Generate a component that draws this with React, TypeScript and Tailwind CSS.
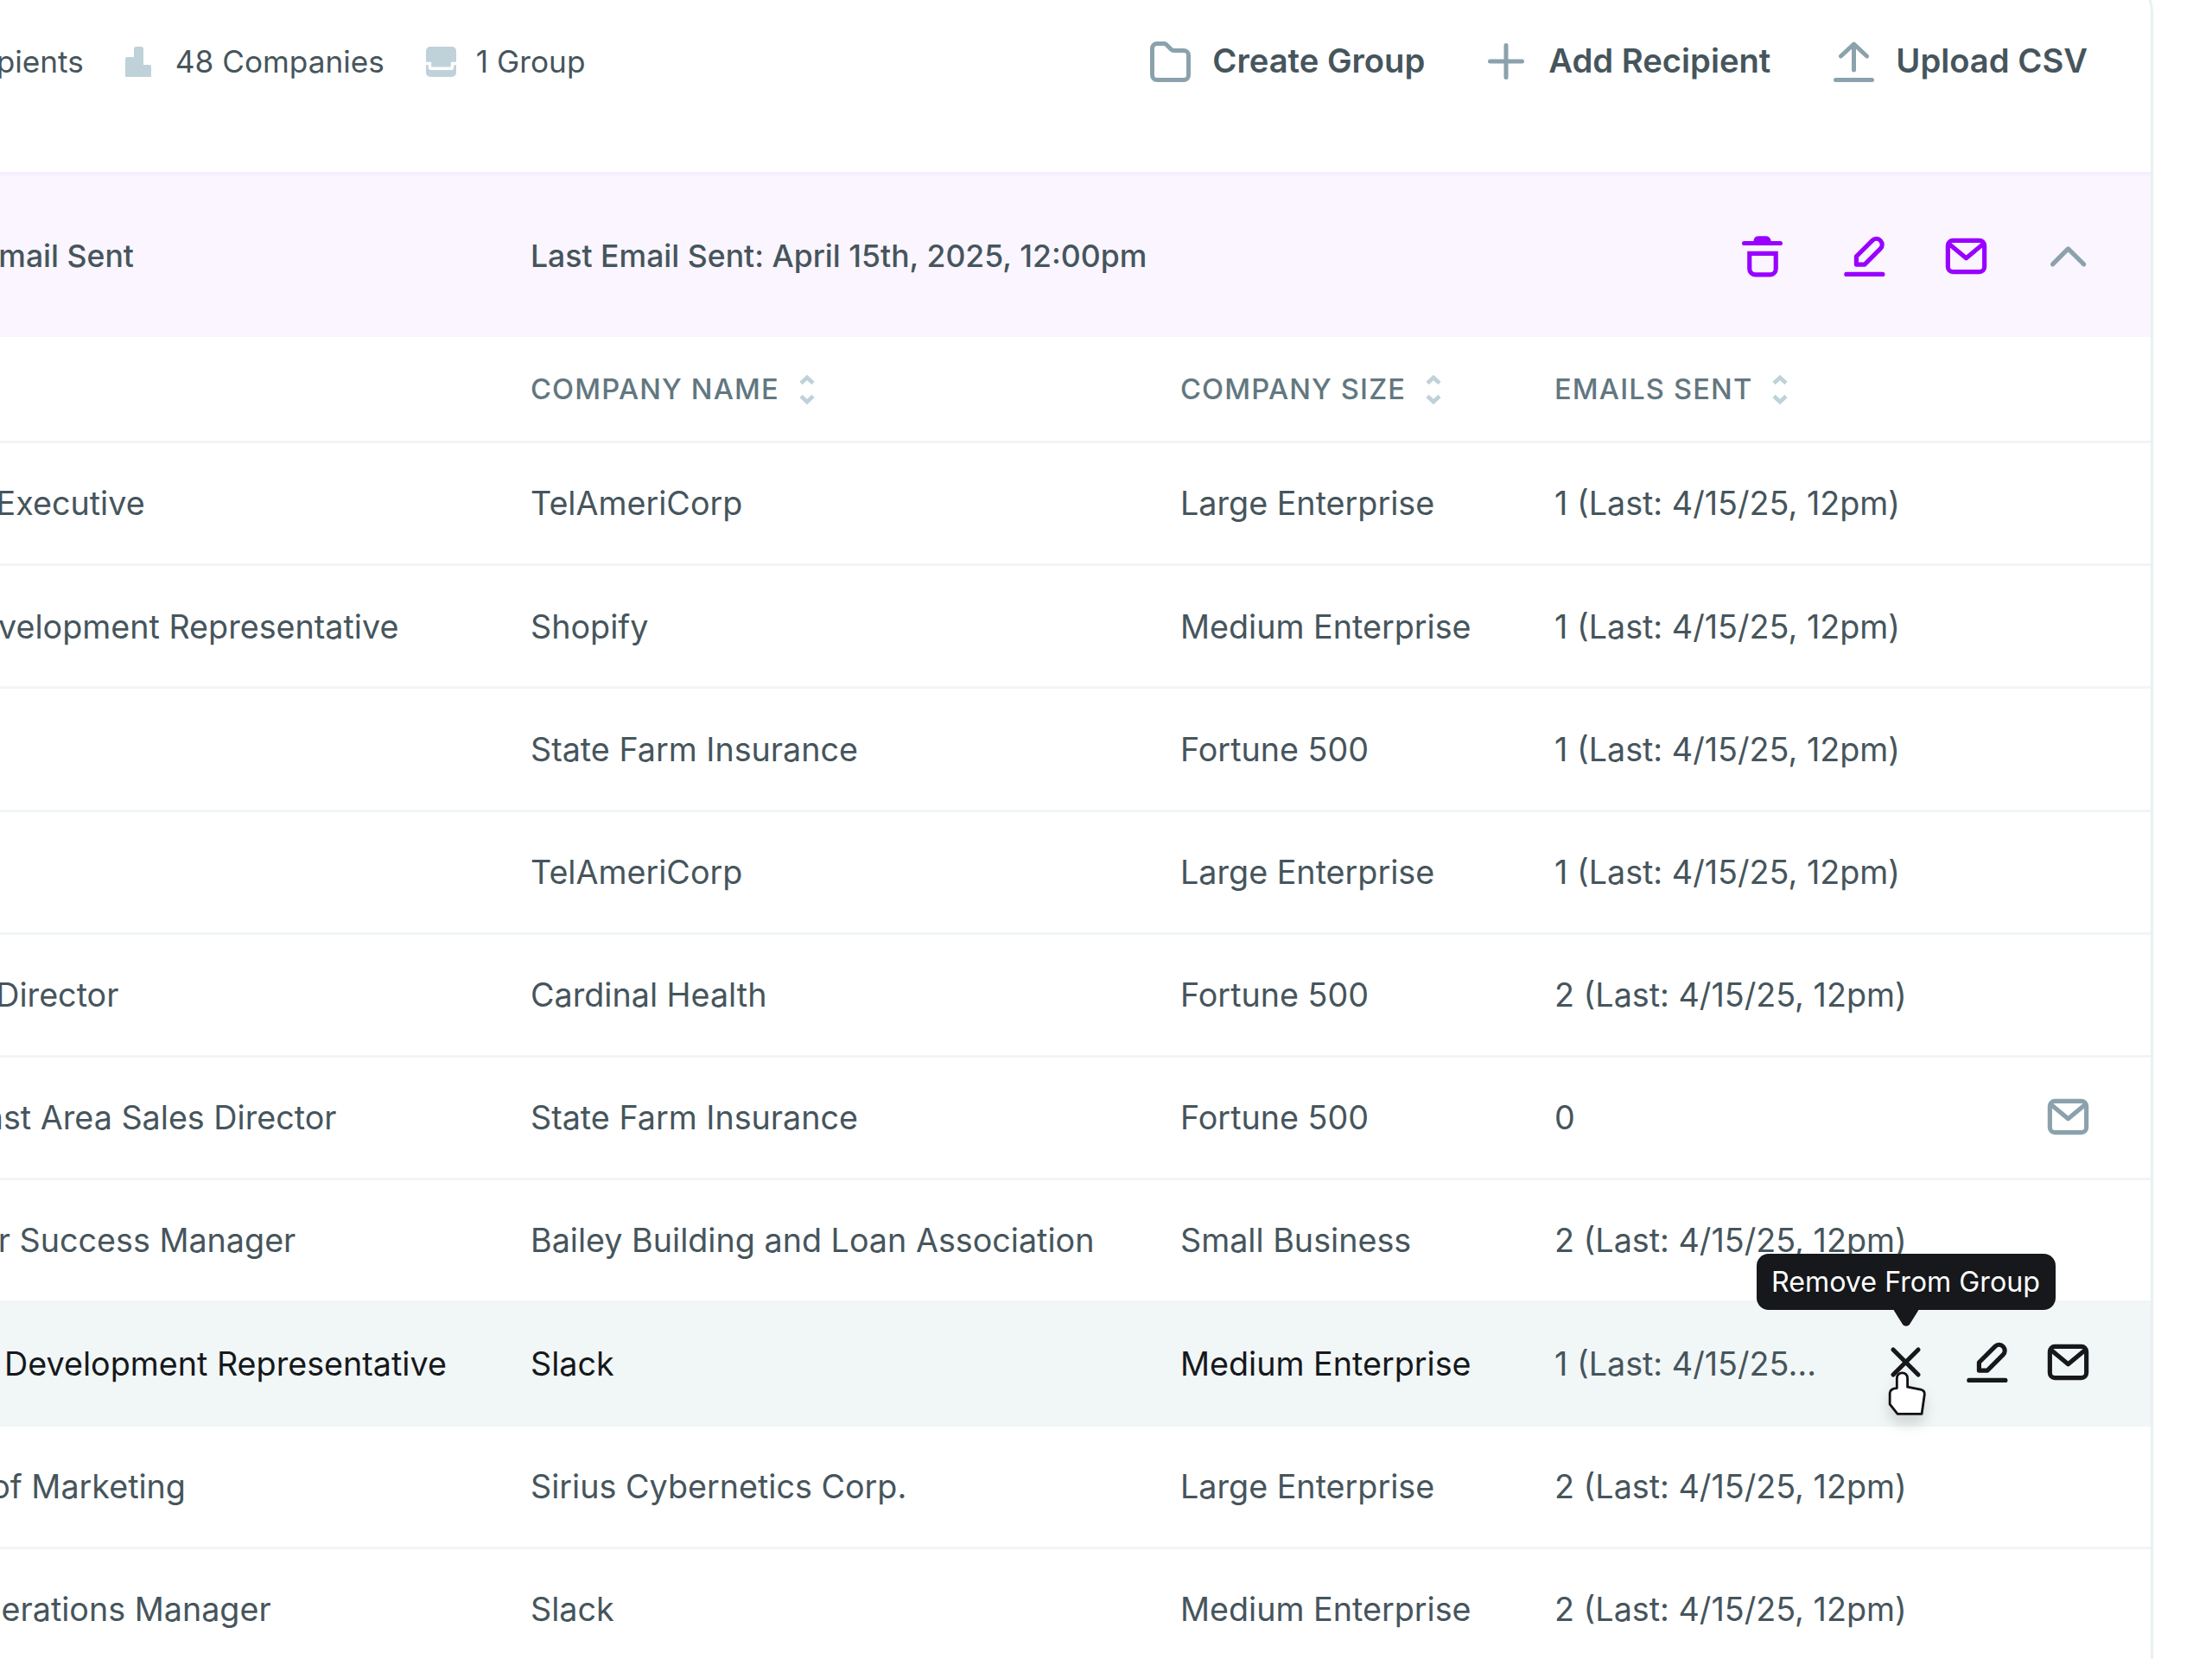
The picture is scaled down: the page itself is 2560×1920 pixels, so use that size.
import React from "react"

const rows = [
  { role: "Sr. Account Executive", company: "TelAmeriCorp", size: "Large Enterprise", sent: "1 (Last: 4/15/25, 12pm)", pad: "pl-[79px]" },
  { role: "Business Development Representative", company: "Shopify", size: "Medium Enterprise", sent: "1 (Last: 4/15/25, 12pm)", pad: "pl-[79px]" },
  { role: "CEO", company: "State Farm Insurance", size: "Fortune 500", sent: "1 (Last: 4/15/25, 12pm)", pad: "pl-[79px]" },
  { role: "CFO", company: "TelAmeriCorp", size: "Large Enterprise", sent: "1 (Last: 4/15/25, 12pm)", pad: "pl-[79px]" },
  { role: "Engineering Director", company: "Cardinal Health", size: "Fortune 500", sent: "2 (Last: 4/15/25, 12pm)", pad: "pl-[72px]" },
  { role: "VP, Northeast Area Sales Director", company: "State Farm Insurance", size: "Fortune 500", sent: "0", mail: true, pad: "pl-[90px]" },
  { role: "Sr. Customer Success Manager", company: "Bailey Building and Loan Association", size: "Small Business", sent: "2 (Last: 4/15/25, 12pm)", pad: "pl-[81px]" },
  { role: "Sr. Business Development Representative", company: "Slack", size: "Medium Enterprise", sent: "1 (Last: 4/15/25, 12pm)", active: true, pad: "pl-[77px]" },
  { role: "Sr. Director of Marketing", company: "Sirius Cybernetics Corp.", size: "Large Enterprise", sent: "2 (Last: 4/15/25, 12pm)", pad: "pl-[79px]" },
  { role: "Regional Operations Manager", company: "Slack", size: "Medium Enterprise", sent: "2 (Last: 4/15/25, 12pm)", pad: "pl-[86px]" },
]

function Icon({ children, className }: { children: React.ReactNode; className?: string }) {
  return (
    <svg viewBox="0 0 24 24" fill="none" stroke="currentColor" strokeWidth={2.1} strokeLinecap="round" strokeLinejoin="round" className={`w-[59px] h-[59px] shrink-0 ${className ?? ""}`}>
      {children}
    </svg>
  )
}

const MailIcon = ({ className }: { className?: string }) => (
  <Icon className={className}>
    <rect x="3.4" y="4.6" width="17.2" height="14.8" rx="2.4" />
    <path d="M4.4 6.6 12 12.9l7.6-6.3" />
  </Icon>
)

const PencilIcon = ({ className }: { className?: string }) => (
  <Icon className={className}>
    <path d="M8.3 15.9v-3.8l7.5-7.5a2.7 2.7 0 0 1 3.8 3.9l-7.4 7.4Z" />
    <path d="M3.6 20.5h17.1" />
  </Icon>
)

const TrashIcon = ({ className }: { className?: string }) => (
  <Icon className={className}>
    <path d="M3.5 5.9h17" />
    <path d="M8.4 4.6c.3-1.2 1-1.6 2-1.6h3.2c1 0 1.7.4 2 1.6Z" fill="currentColor" strokeWidth={1} />
    <path d="M6 10.7h12.4V18a2.7 2.7 0 0 1-2.7 2.7H8.7A2.7 2.7 0 0 1 6 18Z" strokeLinecap="butt" strokeLinejoin="miter" />
  </Icon>
)

function SortIcon() {
  return (
    <svg viewBox="0 0 20 36" fill="none" stroke="#bfd2da" strokeWidth={4.6} className="w-[20px] h-[36px] shrink-0">
      <path d="M3 10.5 10 4l7 6.5" />
      <path d="M3 25.5 10 32l7-6.5" />
    </svg>
  )
}

function HeadCell({ label }: { label: string }) {
  return (
    <div className="flex items-center gap-[22px] pt-[2px]">
      <span className="text-[32.7px] font-medium tracking-[0.035em] text-[#627780]">{label}</span>
      <SortIcon />
    </div>
  )
}

function ToolbarStat({ icon, label, gap }: { icon: React.ReactNode; label: string; gap: string }) {
  return (
    <div className={`flex items-center ${gap}`}>
      {icon}
      <span>{label}</span>
    </div>
  )
}

function ToolbarAction({ icon, label, gap }: { icon: React.ReactNode; label: string; gap: string }) {
  return (
    <button className={`flex items-center ${gap} text-[38.2px] font-semibold text-[#46555c]`}>
      {icon}
      <span>{label}</span>
    </button>
  )
}

export default function App() {
  return (
    <div className="w-[2560px] h-[1920px] overflow-hidden bg-white font-[Inter,sans-serif]">
      <div className="ml-[-300px] mt-[-30px] w-[2792px] rounded-tr-[44px] border-r-[3px] border-t-[3px] border-[#e9f0f3]">
        {/* toolbar */}
        <div className="h-[226px] pt-[74px] pl-[112px] pr-[73px] flex items-start justify-between text-[#46555c]">
          <div className="flex items-center gap-[48px] text-[35.2px] h-[48px]">
            <ToolbarStat
              gap="gap-[28px]"
              label="48 Recipients"
              icon={
                <svg viewBox="0 0 30 35" className="w-[30px] h-[35px] fill-[#bfd2da]">
                  <circle cx="15" cy="9" r="8" />
                  <path d="M0 35c0-9 6-14 15-14s15 5 15 14Z" />
                </svg>
              }
            />
            <ToolbarStat
              gap="gap-[28px]"
              label="48 Companies"
              icon={
                <svg viewBox="0 0 30 35" className="w-[30px] h-[35px] fill-[#bfd2da]">
                  <path d="M10 2.500A2.500 2.500 0 0 1 12.500 0h6A2.500 2.500 0 0 1 21 2.500V21h7a2 2 0 0 1 2 2v12H0V14a2 2 0 0 1 2-2h8Z" />
                </svg>
              }
            />
            <ToolbarStat
              gap="gap-[23px]"
              label="1 Group"
              icon={
                <svg viewBox="0 0 35 35" className="w-[35px] h-[35px]">
                  <rect width="35" height="35" rx="5" fill="#bfd2da" />
                  <path d="M0 19.500h4.500v4.500c0 .8.5 1.300 1.300 1.300h23.400c.8 0 1.300-.5 1.300-1.300v-4.500H35" fill="none" stroke="#fff" strokeWidth={3.4} />
                  <path d="M9 15h17v3.500H9Z" fill="#bfd2da" />
                </svg>
              }
            />
          </div>
          <div className="flex items-center gap-[73px] h-[48px]">
            <ToolbarAction
              gap="gap-[25px]"
              label="Create Group"
              icon={
                <svg viewBox="0 0 47 47" fill="none" stroke="#8ba2ac" strokeWidth={5} className="w-[47px] h-[47px]">
                  <path d="M2.500 8A5.500 5.500 0 0 1 8 2.500h8a4 4 0 0 1 3 1.200l5.500 5.600a4 4 0 0 0 3 1.200H39a5.500 5.500 0 0 1 5.500 5.500V39a5.500 5.500 0 0 1-5.500 5.500H8A5.500 5.500 0 0 1 2.500 39Z" />
                </svg>
              }
            />
            <ToolbarAction
              gap="gap-[28px]"
              label="Add Recipient"
              icon={
                <svg viewBox="0 0 42 42" fill="none" stroke="#8ba2ac" strokeWidth={5} strokeLinecap="round" className="w-[42px] h-[42px]">
                  <path d="M21 2.500v37M2.500 21h37" />
                </svg>
              }
            />
            <ToolbarAction
              gap="gap-[25px]"
              label="Upload CSV"
              icon={
                <svg viewBox="0 0 47 47" fill="none" stroke="#8ba2ac" strokeWidth={5} strokeLinecap="round" strokeLinejoin="round" className="w-[47px] h-[47px]">
                  <path d="M23.500 33V3M8.500 17 23.500 3l15 14" />
                  <path d="M2.500 44.500h42" />
                </svg>
              }
            />
          </div>
        </div>

        {/* group header */}
        <div className="h-[191px] grid grid-cols-[914px_752px_433px_1fr] items-center bg-[#faf5fe] border-t-[4px] border-[#f6eefc] font-[550] text-[35.6px] text-[#46555c]">
          <div className="pl-[98px]">Follow-up Email Sent</div>
          <div className="col-span-2">Last Email Sent: April 15th, 2025, 12:00pm</div>
          <div className="flex justify-end gap-[59px] pr-[66px]">
            <TrashIcon className="text-[#9900ff]" />
            <PencilIcon className="text-[#9900ff]" />
            <MailIcon className="text-[#9900ff]" />
            <Icon className="text-[#8ba2ac]">
              <path d="M4.7 15.8 12 8.5l7.4 7.3" />
            </Icon>
          </div>
        </div>

        {/* table head */}
        <div className="h-[123px] grid grid-cols-[914px_752px_433px_1fr] items-center border-b-[3px] border-[#f1f5f7]">
          <div className="pl-[79px] text-[32.7px] font-medium tracking-[0.035em] text-[#627780]">TITLE</div>
          <HeadCell label="COMPANY NAME" />
          <HeadCell label="COMPANY SIZE" />
          <HeadCell label="EMAILS SENT" />
        </div>

        {rows.map((row, i) => (
          <div
            key={i}
            className={`h-[142.2px] grid grid-cols-[914px_752px_433px_1fr] items-center border-b-[3px] text-[37.7px] ${
              row.active ? "bg-[#f1f6f7] border-[#f1f6f7] text-[#16181b]" : "border-[#f1f5f7] text-[#46555c]"
            }`}
          >
            <div className={`${row.pad} whitespace-nowrap`}>{row.role}</div>
            <div>{row.company}</div>
            <div>{row.size}</div>
            <div className="flex items-center justify-between pr-[66px]">
              <span className={row.active ? "w-[304px] truncate text-[#46555c]" : ""}>{row.sent}</span>
              {row.mail && <MailIcon className="text-[#8ba2ac] -mt-[2px]" />}
              {row.active && (
                <div className="flex gap-[35px] text-[#16181b] -mt-[2px]">
                  <button className="relative">
                    <Icon>
                      <path d="M6.1 6.1 17.900 17.900M17.900 6.1 6.1 17.900" />
                    </Icon>
                    <div className="absolute bottom-[90px] left-1/2 -translate-x-1/2 h-[65px] w-[346px] flex items-center justify-center rounded-[14px] bg-[#16181b] text-[32.2px] text-white whitespace-nowrap">
                      Remove From Group
                      <svg viewBox="0 0 29 19" className="absolute top-full left-1/2 -translate-x-1/2 w-[29px] h-[19px] fill-[#16181b]">
                        <path d="M0 0h29l-10 16c-2 3.500-7 3.500-9 0Z" />
                      </svg>
                    </div>
                    {/* cursor */}
                    <svg viewBox="0 0 50 52" fill="#fff" stroke="#111" strokeWidth={2.6} strokeLinejoin="round" className="absolute left-[6px] top-[42px] w-[54px] h-[56px] overflow-visible drop-shadow-[0_10px_8px_rgba(0,0,0,0.14)]">
                      <path d="M12.300 16.300V5.500a5.700 5.700 0 0 1 11.400 0V15l14 2.700c2.900.6 4.600 2.300 4.300 5.300l-3 21H13L4.700 33.500V21.700c0-3 3-5.400 7.600-5.400Z" />
                    </svg>
                  </button>
                  <PencilIcon />
                  <MailIcon />
                </div>
              )}
            </div>
          </div>
        ))}
      </div>
    </div>
  )
}
